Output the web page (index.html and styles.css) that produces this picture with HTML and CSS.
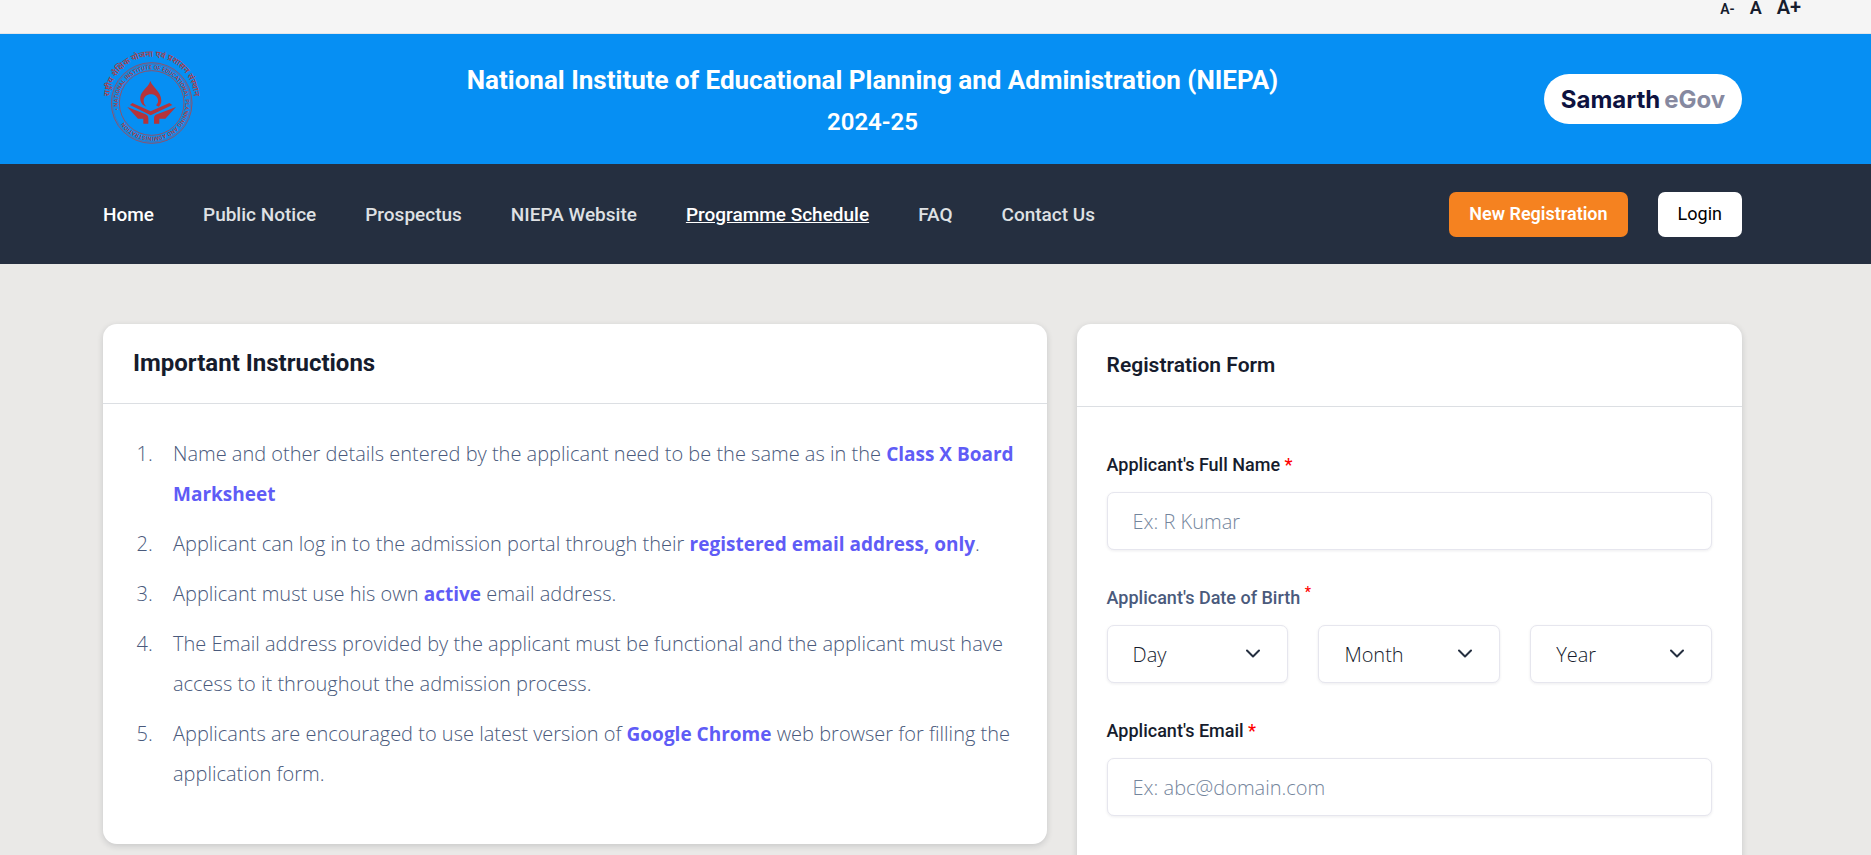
FILE: index.html
```html
<!DOCTYPE html>
<html lang="en">
<head>
    <meta charset="UTF-8">
    <meta name="viewport" content="width=device-width, initial-scale=1.0">
    <title>NIEPA Admission Portal 2024-25</title>
    <link rel="stylesheet" href="styles.css">
</head>
<body>
    <div class="topbar">
        <button type="button" class="font-btn font-small">A-</button>
        <button type="button" class="font-btn font-normal">A</button>
        <button type="button" class="font-btn font-large">A+</button>
    </div>

    <header class="header container">
        <a href="#" class="emblem" aria-label="NIEPA">
            <svg viewBox="39 57 294 270" width="98" height="90">
                <defs>
                    <path id="arc-hindi" d="M58 192 A127 127 0 0 1 312 192"/>
                    <path id="arc-english" d="M86 225 A101 101 0 0 1 284 183 A101 101 0 0 1 86 225"/>
                </defs>
                <g fill="none" stroke="#a8464f" stroke-width="2.5">
                    <circle cx="185" cy="204" r="121"/>
                    <circle cx="185" cy="204" r="117" stroke-width="1"/>
                    <circle cx="185" cy="204" r="97"/>
                </g>
                <g fill="#b5343a">
                    <path d="M181 138 C188 158 214 170 214 197 C214 204 211 210 206 215 L198 211 C203 206 205 201 204 195 C202 184 193 178 182 178 C171 178 161 186 161 197 C161 203 163 208 169 215 L158 209 C149 200 149 185 155 175 C163 161 175 155 181 138Z"/>
                    <path d="M120 210 L127 204 L182 229 L238 204 L247 210 L182 241Z"/>
                    <path d="M112 216 L167 238 Q175 241 175 249 V266 H160 V251 H144Z"/>
                    <path d="M258 216 L201 238 Q192 241 192 249 V266 H208 V251 H226Z"/>
                </g>
                <text class="emblem-hindi"><textPath href="#arc-hindi" startOffset="50%" text-anchor="middle">राष्ट्रीय शैक्षिक योजना एवं प्रशासन संस्थान</textPath></text>
                <text class="emblem-english"><textPath href="#arc-english">• NATIONAL INSTITUTE OF EDUCATIONAL PLANNING AND ADMINISTRATION</textPath></text>
            </svg>
        </a>
        <div class="header-title">
            <h1>National Institute of Educational Planning and Administration (NIEPA)</h1>
            <p>2024-25</p>
        </div>
        <a href="#" class="samarth">Samarth<span>eGov</span></a>
    </header>

    <nav class="navbar container">
        <ul class="nav-links">
            <li><a href="#" class="active">Home</a></li>
            <li><a href="#">Public Notice</a></li>
            <li><a href="#">Prospectus</a></li>
            <li><a href="#">NIEPA Website</a></li>
            <li><a href="#" class="current">Programme Schedule</a></li>
            <li><a href="#">FAQ</a></li>
            <li><a href="#">Contact Us</a></li>
        </ul>
        <div class="nav-actions">
            <button type="button" class="btn btn-orange">New Registration</button>
            <button type="button" class="btn btn-white">Login</button>
        </div>
    </nav>

    <main class="container">
        <div class="row">
            <div class="col">
                <section class="card">
                    <h2 class="card-title">Important Instructions</h2>
                    <ol class="instructions">
                        <li>Name and other details entered by the applicant need to be the same as in the <b>Class X Board Marksheet</b></li>
                        <li>Applicant can log in to the admission portal through their <b>registered email address, only</b>.</li>
                        <li>Applicant must use his own <b>active</b> email address.</li>
                        <li>The Email address provided by the applicant must be functional and the applicant must have access to it throughout the admission process.</li>
                        <li>Applicants are encouraged to use latest version of <b>Google Chrome</b> web browser for filling the application form.</li>
                    </ol>
                </section>
            </div>

            <div class="col">
                <section class="card">
                    <h3 class="card-title form-title">Registration Form</h3>
                    <form class="form">
                        <div class="field">
                            <label for="name">Applicant's Full Name <span class="required">*</span></label>
                            <input type="text" id="name" class="control" placeholder="Ex: R Kumar">
                        </div>
                        <div class="field">
                            <label for="day" class="muted">Applicant's Date of Birth <sup class="required">*</sup></label>
                            <div class="dob">
                                <div class="select">
                                    <select id="day" class="control"><option>Day</option></select>
                                    <svg viewBox="0 0 14 10" width="14" height="10"><path d="M1 1.5 L7 7.5 L13 1.5"/></svg>
                                </div>
                                <div class="select">
                                    <select id="month" class="control" aria-label="Month"><option>Month</option></select>
                                    <svg viewBox="0 0 14 10" width="14" height="10"><path d="M1 1.5 L7 7.5 L13 1.5"/></svg>
                                </div>
                                <div class="select">
                                    <select id="year" class="control" aria-label="Year"><option>Year</option></select>
                                    <svg viewBox="0 0 14 10" width="14" height="10"><path d="M1 1.5 L7 7.5 L13 1.5"/></svg>
                                </div>
                            </div>
                        </div>
                        <div class="field">
                            <label for="email">Applicant's Email <span class="required">*</span></label>
                            <input type="email" id="email" class="control" placeholder="Ex: abc@domain.com">
                        </div>
                    </form>
                </section>
            </div>
        </div>
    </main>
</body>
</html>
```
FILE: styles.css
```css
:root {
    --blue: #068ff3;
    --navy: #252f40;
    --orange: #f58220;
    --ink: #161c2d;
    --grey-text: #4a5a7c;
    --link: #5f5cf6;
    --border: #e6e6ee;
    --text-font: "Open Sans", "Noto Sans", sans-serif;
}

* {
    box-sizing: border-box;
}

/* Hide the page scrollbar */
html {
    scrollbar-width: none;
}

body {
    margin: 0;
    background-color: #eae9e7;
    color: var(--ink);
    font-family: Roboto, "Noto Sans", sans-serif;
    font-size: 20px;
}

h1, h2, h3, p, ul, ol {
    margin: 0;
    padding: 0;
}

a {
    color: inherit;
    text-decoration: none;
}

button, input, select {
    font-family: inherit;
}

.container {
    padding-left: 103px;
    padding-right: 129px;
}

/* Text size bar */
.topbar {
    display: flex;
    justify-content: flex-end;
    align-items: baseline;
    gap: 15px;
    height: 34px;
    padding-right: 70px;
    background-color: #f5f5f5;
    border-bottom: 1px solid #e3e6ea;
}

.font-btn {
    padding: 0;
    border: none;
    background: none;
    color: var(--ink);
    font-weight: 600;
    line-height: 14px;
    cursor: pointer;
}

.font-small {
    font-size: 14px;
}

.font-normal {
    font-size: 18px;
}

.font-large {
    font-size: 20px;
}

/* Header */
.header {
    display: flex;
    justify-content: space-between;
    align-items: center;
    padding-top: 20px;
    padding-bottom: 20px;
    background-color: var(--blue);
    color: #fff;
}

.emblem svg {
    display: block;
    overflow: visible;
}

.emblem text {
    fill: #a8404a;
    font-weight: 600;
}

.emblem-hindi {
    font-size: 25px;
}

.emblem-english {
    font-size: 17px;
}

.header-title {
    padding-top: 4px;
    text-align: center;
}

.header-title h1 {
    font-size: 26px;
    font-weight: 700;
    line-height: 42px;
}

.header-title p {
    font-size: 24px;
    font-weight: 600;
    line-height: 42px;
}

.samarth {
    display: flex;
    justify-content: center;
    align-items: center;
    gap: 4px;
    width: 198px;
    height: 50px;
    border-radius: 25px;
    background-color: #fff;
    color: #0d1240;
    font-family: Inter, sans-serif;
    font-size: 24px;
    font-weight: 700;
}

.samarth span {
    color: #8689a0;
}

/* Navigation */
.navbar {
    display: flex;
    justify-content: space-between;
    align-items: center;
    height: 100px;
    background-color: var(--navy);
}

.nav-links {
    display: flex;
    gap: 49px;
    list-style: none;
    color: #dfe1e4;
    font-size: 19px;
    font-weight: 500;
}

.nav-links .active,
.nav-links .current {
    color: #fff;
}

.nav-links .current {
    text-decoration: underline;
}

.nav-actions {
    display: flex;
    gap: 30px;
}

.btn {
    height: 45px;
    padding: 0 20px 2px;
    border: none;
    border-radius: 7px;
    font-size: 18px;
    font-weight: 600;
    cursor: pointer;
}

.btn-orange {
    background-color: var(--orange);
    color: #fff;
}

.btn-white {
    background-color: #fff;
    color: #000;
    font-weight: 400;
}

/* Content */
main {
    padding-top: 60px;
    padding-bottom: 60px;
}

.row {
    display: grid;
    grid-template-columns: 7fr 5fr;
    align-items: start;
    margin: 0 -15px;
}

.col {
    padding: 0 15px;
}

.card {
    border-radius: 14px;
    background-color: #fff;
    box-shadow: 0 2px 6px rgba(22, 28, 45, 0.16);
}

.card-title {
    padding: 0 30px;
    border-bottom: 1px solid #dcdfe3;
    font-size: 24px;
    font-weight: 700;
    line-height: 79px;
}

.form-title {
    font-size: 21px;
    font-weight: 600;
    line-height: 82px;
}

.instructions {
    padding: 30px 30px 50px 55px;
    color: var(--grey-text);
    font-family: var(--text-font);
    font-weight: 300;
    line-height: 40px;
}

.instructions li {
    padding-left: 15px;
}

.instructions li + li {
    margin-top: 10px;
}

.instructions b {
    color: var(--link);
    font-size: 19px;
    font-weight: 700;
    line-height: 20px;
}

/* Form */
.form {
    display: flex;
    flex-direction: column;
    gap: 36px;
    padding: 46px 30px 60px;
}

.field label {
    display: block;
    margin-bottom: 15px;
    font-size: 18px;
    font-weight: 500;
    line-height: 24px;
}

.field .muted {
    color: var(--grey-text);
}

.required {
    color: #f00;
}

sup.required {
    font-size: 14px;
    line-height: 0;
}

.control {
    display: block;
    width: 100%;
    height: 58px;
    padding: 0 25px;
    border: 1px solid var(--border);
    border-radius: 7px;
    background-color: #fff;
    box-shadow: 0 1px 3px rgba(22, 28, 45, 0.08);
    color: var(--ink);
    font-family: var(--text-font);
    font-size: 20px;
    font-weight: 300;
    appearance: none;
}

.control::placeholder {
    color: #74859c;
}

.dob {
    display: grid;
    grid-template-columns: repeat(3, 1fr);
    gap: 30px;
}

.select {
    display: grid;
    align-items: center;
}

.select > * {
    grid-area: 1 / 1;
}

.select svg {
    justify-self: end;
    margin-right: 28px;
    fill: none;
    stroke: #252f40;
    stroke-width: 2;
    stroke-linecap: round;
    stroke-linejoin: round;
    pointer-events: none;
}
```
